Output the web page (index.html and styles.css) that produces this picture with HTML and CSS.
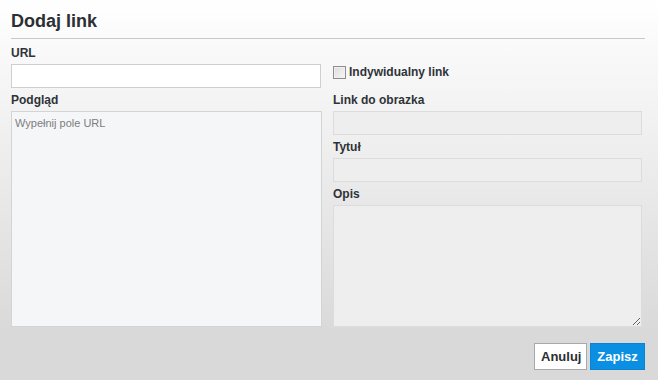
FILE: index.html
```html
<!DOCTYPE html>
<html lang="pl">
<head>
<meta charset="utf-8">
<title>Dodaj link</title>
<link rel="stylesheet" href="styles.css">
</head>
<body>
<div class="dialog">
  <h1 class="title">Dodaj link</h1>
  <div class="columns">
    <div class="col col-left">
      <label class="label">URL</label>
      <input class="input input-url" type="text">
      <label class="label label-gap">Podgląd</label>
      <div class="preview">Wypełnij pole URL</div>
    </div>
    <div class="col col-right">
      <div class="label-spacer"></div>
      <div class="check-row">
        <span class="checkbox"></span>
        <span class="check-label">Indywidualny link</span>
      </div>
      <label class="label label-gap">Link do obrazka</label>
      <input class="input input-dis" type="text">
      <label class="label label-gap">Tytuł</label>
      <input class="input input-dis" type="text">
      <label class="label label-gap">Opis</label>
      <textarea class="textarea"></textarea>
    </div>
  </div>
  <div class="actions">
    <button class="btn btn-cancel">Anuluj</button>
    <button class="btn btn-save">Zapisz</button>
  </div>
</div>
</body>
</html>
```

FILE: styles.css
```css
html, body {
  margin: 0;
  padding: 0;
  height: 100%;
}
body {
  background: linear-gradient(180deg, #ffffff 0px, #d9d9d9 335px, #d9d9d9 100%);
  background-color: #d9d9d9;
  font-family: "Liberation Sans", Arial, sans-serif;
  color: #2f3338;
}
.dialog {
  padding: 0 13px 0 11px;
  display: flex;
  flex-direction: column;
}
.title {
  margin: 0;
  font-size: 18px;
  line-height: 22px;
  font-weight: bold;
  color: #2b2f33;
  border-bottom: 1px solid #c9c9c9;
  box-sizing: border-box;
  height: 39px;
  padding-top: 10px;
}
.columns {
  display: flex;
  gap: 11px;
  padding-top: 7px;
}
.col {
  display: flex;
  flex-direction: column;
}
.col-left {
  width: 311px;
}
.col-right {
  width: 309px;
}
.label {
  display: block;
  font-size: 12px;
  line-height: 15px;
  font-weight: bold;
  color: #2f3338;
  margin-bottom: 3px;
}
.label-gap {
  margin-top: 5px;
}
.label-spacer {
  height: 18px;
}
.input {
  box-sizing: border-box;
  height: 24px;
  margin: 0;
  padding: 2px 4px;
  font-family: inherit;
  font-size: 12px;
  outline: none;
}
.input-url {
  width: 310px;
  background: #ffffff;
  border: 1px solid #cfcfcf;
}
.input-dis {
  width: 309px;
  background: #eeeeee;
  border: 1px solid #dcdcdc;
}
.preview {
  box-sizing: border-box;
  height: 216px;
  background: #f5f6f8;
  border: 1px solid #d4d4d4;
  padding: 4px 3px;
  font-size: 11px;
  line-height: 14px;
  color: #7d7d7d;
}
.check-row {
  height: 16px;
  margin-bottom: 8px;
  display: flex;
  align-items: center;
  gap: 3px;
}
.checkbox {
  box-sizing: border-box;
  width: 13px;
  height: 13px;
  border: 1px solid #8e8e8e;
  background: linear-gradient(135deg, #dcdcdc 0%, #f7f7f7 100%);
  box-shadow: inset 0 0 0 1px #f0f0f0;
}
.check-label {
  font-size: 12px;
  font-weight: bold;
  color: #2f3338;
}
.textarea {
  box-sizing: border-box;
  width: 309px;
  height: 122px;
  margin: 0;
  background: #eeeeee;
  border: 1px solid #dcdcdc;
  resize: vertical;
  outline: none;
  font-family: inherit;
}
.actions {
  display: flex;
  justify-content: flex-end;
  gap: 3px;
  margin-top: 16px;
}
.btn {
  box-sizing: border-box;
  height: 27px;
  margin: 0;
  padding: 0 6px;
  font-family: "Liberation Sans", Arial, sans-serif;
  font-size: 13px;
  font-weight: bold;
  cursor: pointer;
}
.btn-cancel {
  width: 53px;
  background: #ffffff;
  color: #2b2f33;
  border: 1px solid #a9a9a9;
}
.btn-save {
  width: 55px;
  background: #0a8fe2;
  color: #ffffff;
  border: 1px solid #0a84d0;
}
```
